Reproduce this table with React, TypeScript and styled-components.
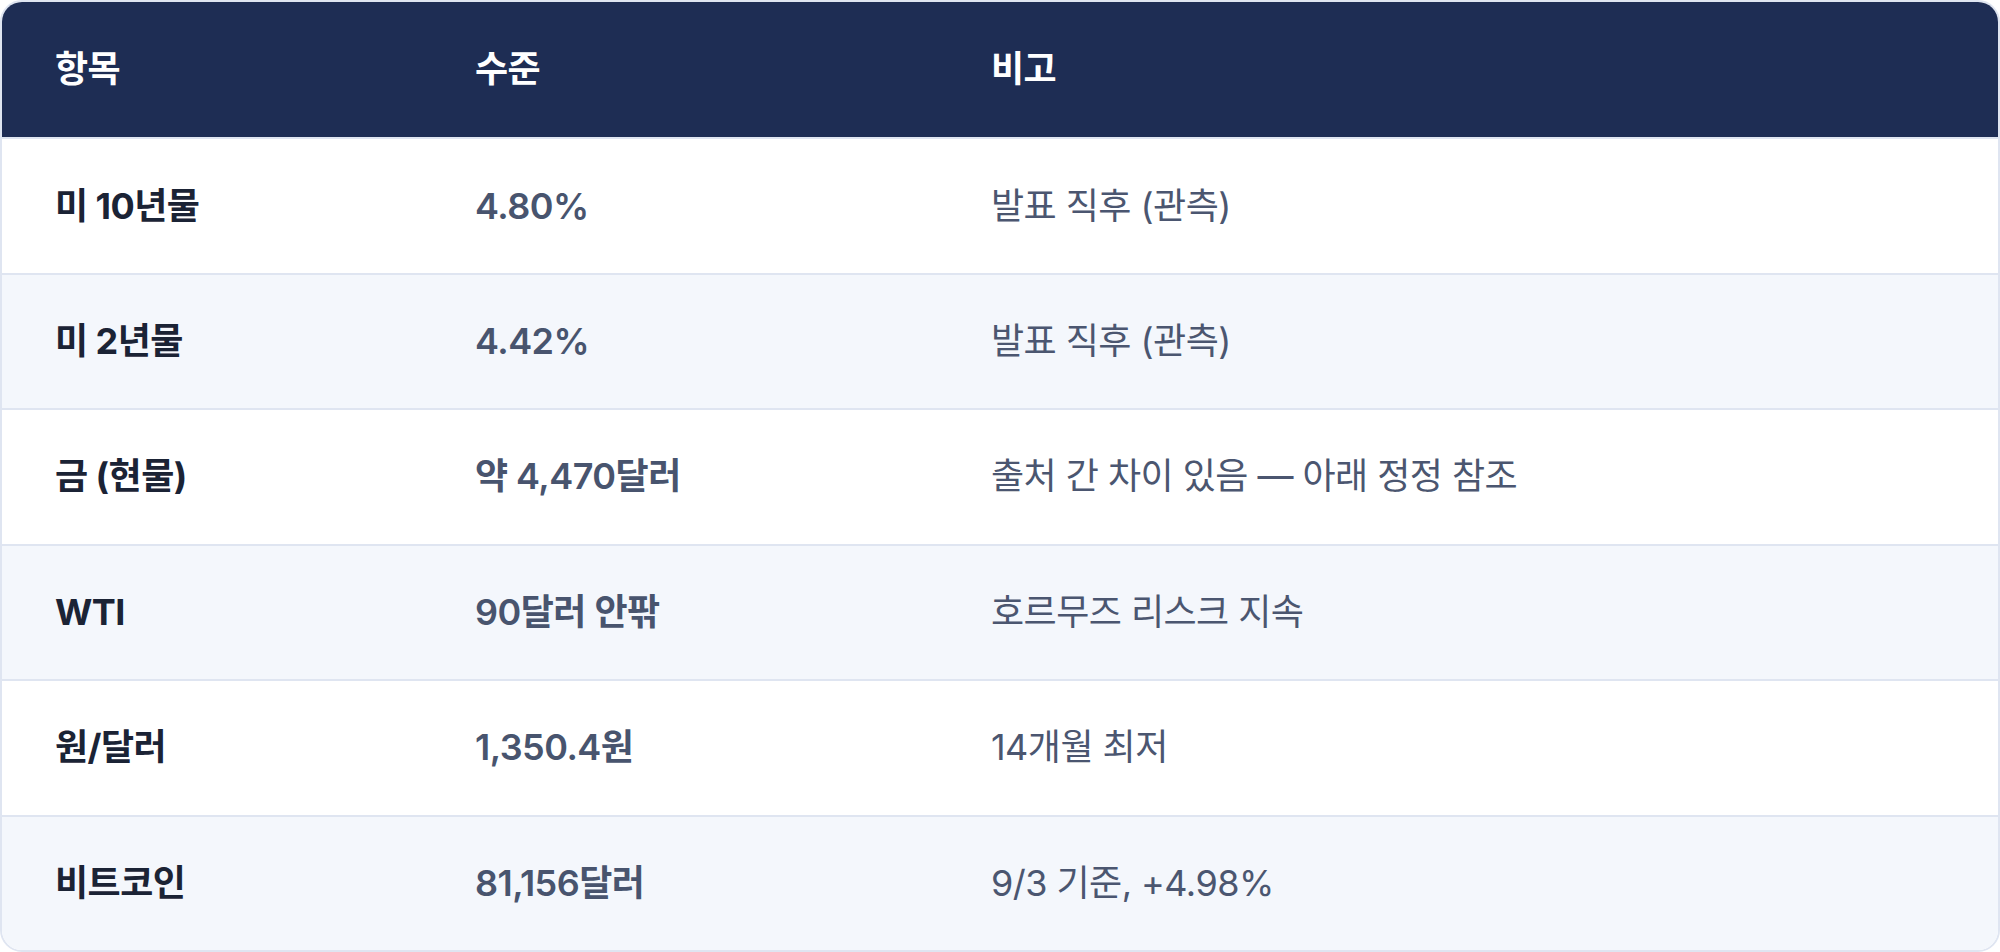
import React from 'react'
import styled, { createGlobalStyle, css } from 'styled-components'

const rows = [
  { item: '미 10년물', level: '4.80%', note: '발표 직후 (관측)' },
  { item: '미 2년물', level: '4.42%', note: '발표 직후 (관측)' },
  { item: '금 (현물)', level: '약 4,470달러', note: '출처 간 차이 있음 — 아래 정정 참조' },
  { item: 'WTI', level: '90달러 안팎', note: '호르무즈 리스크 지속' },
  { item: '원/달러', level: '1,350.4원', note: '14개월 최저' },
  { item: '비트코인', level: '81,156달러', note: '9/3 기준, +4.98%' },
]

export default function App () {
  return (
    <>
      <GlobalStyle />
      <Table>
        <Row header>
          <HeadCell>항목</HeadCell>
          <HeadCell>수준</HeadCell>
          <HeadCell>비고</HeadCell>
        </Row>
        {rows.map((row, i) => (
          <Row key={row.item} striped={i % 2 === 1}>
            <ItemCell>{row.item}</ItemCell>
            <LevelCell>{row.level}</LevelCell>
            <NoteCell>{row.note}</NoteCell>
          </Row>
        ))}
      </Table>
    </>
  )
}

const GlobalStyle = createGlobalStyle`
  html, body {
    margin: 0;
    padding: 0;
    background: #ffffff;
  }
  body {
    font-family: Inter, "Noto Sans CJK KR", sans-serif;
  }
`

const Table = styled.div`
  box-sizing: border-box;
  width: 2000px;
  height: 952px;
  display: grid;
  grid-template-rows: repeat(7, 1fr);
  border: 2px solid #dfe5f1;
  border-radius: 22px;
  overflow: hidden;
  background: #ffffff;
`

const Row = styled.div<{ header?: boolean; striped?: boolean }>`
  display: grid;
  grid-template-columns: 420px 516px 1fr;
  align-items: center;
  background: #ffffff;

  ${({ header }) => header && css`
    background: #1e2d54;
  `}

  ${({ header }) => !header && css`
    border-top: 2px solid #dfe5f1;
  `}

  ${({ striped }) => striped && css`
    background: #f4f7fc;
  `}
`

const Cell = styled.div`
  padding: 0 0 0 53px;
  font-size: 36px;
  line-height: 1.2;
  letter-spacing: -0.015em;
  white-space: nowrap;
`

const HeadCell = styled(Cell)`
  color: #ffffff;
  font-weight: 700;
`

const ItemCell = styled(Cell)`
  color: #1b2335;
  font-weight: 700;
`

const LevelCell = styled(Cell)`
  color: #48546e;
  font-weight: 600;
`

const NoteCell = styled(Cell)`
  color: #4b5670;
  font-weight: 400;
`
